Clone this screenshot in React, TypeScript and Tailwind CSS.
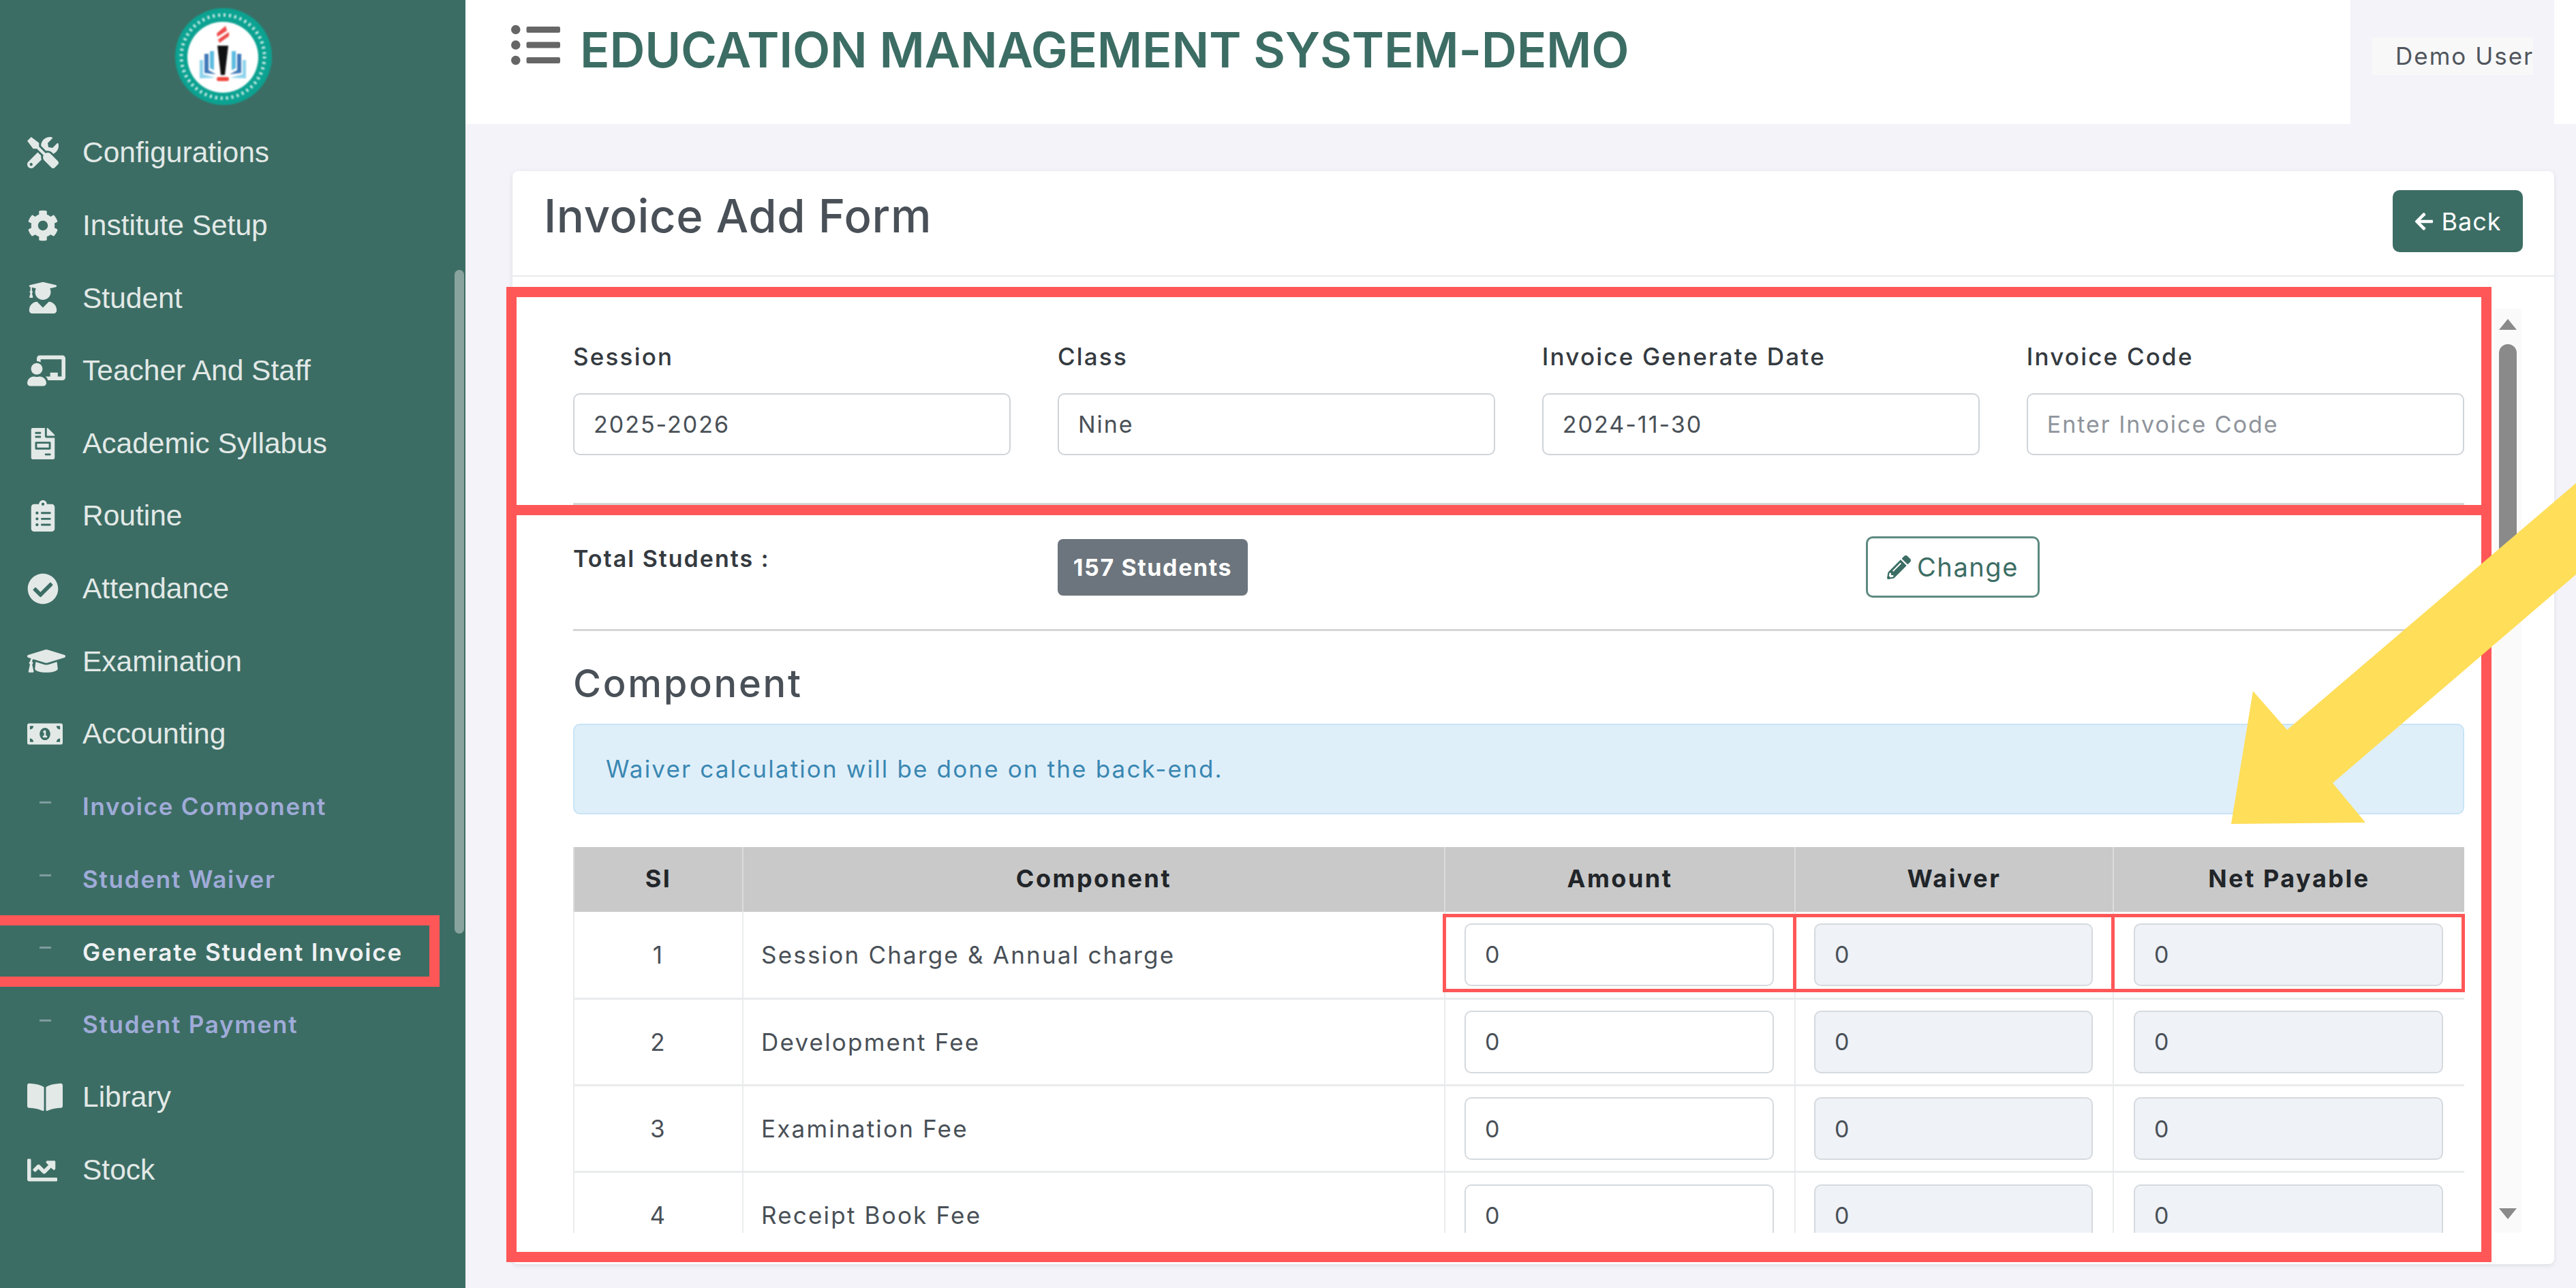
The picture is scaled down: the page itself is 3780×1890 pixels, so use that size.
import React from "react";
import {
  FaTools, FaCog, FaUserGraduate, FaChalkboardTeacher, FaFileInvoice, FaClipboardList,
  FaCheckCircle, FaGraduationCap, FaMoneyBillAlt, FaBookOpen, FaChartLine, FaListUl,
  FaArrowLeft, FaPencilAlt,
} from "react-icons/fa";

const main = [
  { label: "Configurations", Icon: FaTools, size: 46 },
  { label: "Institute Setup", Icon: FaCog, size: 46 },
  { label: "Student", Icon: FaUserGraduate, size: 46 },
  { label: "Teacher And Staff", Icon: FaChalkboardTeacher, size: 56 },
  { label: "Academic Syllabus", Icon: FaFileInvoice, size: 46 },
  { label: "Routine", Icon: FaClipboardList, size: 46 },
  { label: "Attendance", Icon: FaCheckCircle, size: 46 },
  { label: "Examination", Icon: FaGraduationCap, size: 56 },
  { label: "Accounting", Icon: FaMoneyBillAlt, size: 52 },
];
const subs = [
  { label: "Invoice Component" },
  { label: "Student Waiver" },
  { label: "Generate Student Invoice", active: true },
  { label: "Student Payment" },
];
const tail = [
  { label: "Library", Icon: FaBookOpen, size: 52 },
  { label: "Stock", Icon: FaChartLine, size: 44 },
];
const rows = ["Session Charge & Annual charge", "Development Fee", "Examination Fee", "Receipt Book Fee"];
const PF = "font-['Inter','Liberation_Sans',sans-serif]";

function MainItem({ label, Icon, size }: { label: string; Icon: React.ComponentType<{ size?: number }>; size: number }) {
  return (
    <div className="flex h-[106.6px] items-center pl-[40px] text-[#e2e9e7]">
      <span className="flex w-[81px] items-center">
        <Icon size={size} />
      </span>
      <span className="font-['Liberation_Sans',sans-serif] text-[42.5px]">{label}</span>
    </div>
  );
}

function SubItem({ label, active }: { label: string; active?: boolean }) {
  return (
    <div className={`flex h-[106.6px] items-center pl-[58px] ${PF} text-[35px] font-semibold tracking-[1.75px] ${active ? "text-[#eef1f2]" : "text-[#9fabd8]"}`}>
      <span className="mr-[46px] h-[3px] w-[17px] -translate-y-[6px] bg-[#7f9c9f]" />
      <span>{label}</span>
    </div>
  );
}

function Logo() {
  return (
    <svg width="144" height="144" viewBox="0 0 144 144" className="blur-[1px]">
      <circle cx="72" cy="72" r="71" fill="#0ca291" />
      <circle cx="71" cy="72" r="61" fill="none" stroke="#cdeee9" strokeWidth="5" strokeDasharray="3 5" />
      <circle cx="71" cy="73" r="52" fill="#fff" />
      <path d="M75 27 L62 38 L63 43 L77 34 Z" fill="#ef4a4a" />
      <path d="M80 36 L64 47 L66 52 L80 42 Z" fill="#ef4a4a" />
      <path d="M63 56 H79 L74 99 H68 Z" fill="#111" />
      <rect x="62" y="102" width="18" height="6" rx="3" fill="#f0483f" />
      <path d="M37 77 H42 V98 L60 103 L37 104 Z" fill="#8fd4ec" />
      <path d="M44 68 H50 V92 L61 98 L44 96 Z" fill="#3f78b8" />
      <path d="M52 64 H58 V92 L52 89 Z" fill="#5bbce0" />
      <path d="M105 77 H100 V98 L82 103 L105 104 Z" fill="#8fd4ec" />
      <path d="M98 68 H92 V92 L81 98 L98 96 Z" fill="#3f78b8" />
      <path d="M90 64 H84 V92 L90 89 Z" fill="#5bbce0" />
    </svg>
  );
}

function Field({ label, value, placeholder }: { label: string; value?: string; placeholder?: string }) {
  return (
    <div>
      <div className={`h-[40px] text-[35px] font-medium leading-[40px] tracking-[2.2px] text-[#343a40] ${PF}`}>{label}</div>
      <div className={`mt-[34px] flex h-[91px] items-center rounded-[10px] border-2 border-[#ced4da] bg-white pl-[28px] text-[34px] tracking-[2px] ${placeholder ? "text-[#8f949c]" : "text-[#495057]"} ${PF}`}>
        {value ?? placeholder}
      </div>
    </div>
  );
}

function CellInput({ disabled }: { disabled?: boolean }) {
  return (
    <div className={`flex h-[92px] items-center rounded-[10px] border-2 border-[#d5dade] pl-[28px] text-[34px] text-[#495057] ${disabled ? "bg-[#eff2f7]" : "bg-white"}`}>
      0
    </div>
  );
}

export default function App() {
  return (
    <div className="relative flex h-[1890px] w-[3780px] overflow-hidden bg-[#f3f3f9]">
      <aside className="relative w-[683px] shrink-0 bg-[#3c6d64]">
        <div className="flex h-[171px] justify-center pt-[11px]">
          <div className="-translate-x-[14px]"><Logo /></div>
        </div>
        {main.map((m) => <MainItem key={m.label} {...m} />)}
        {subs.map((s) => <SubItem key={s.label} {...s} />)}
        {tail.map((m) => <MainItem key={m.label} {...m} />)}
        <div className="absolute left-[667px] top-[396px] h-[974px] w-[14px] rounded-full bg-[#88a39d]" />
      </aside>

      <main className="flex min-w-0 flex-1 flex-col">
        <header className="flex h-[182px] shrink-0">
          <div className="flex w-[2766px] items-start bg-white pl-[67px] pt-[31px]">
            <span className="mt-[-1px] text-[#666]"><FaListUl size={72} /></span>
            <span className={`ml-[29px] mt-[2px] text-[72px] font-semibold leading-[80px] tracking-[-0.2px] text-[#3c6d64] ${PF}`}>
              EDUCATION MANAGEMENT SYSTEM-DEMO
            </span>
          </div>
          <div className="flex w-[299px] items-start pl-[31px] pt-[55px]">
            <div className={`flex h-[55px] w-[237px] items-center overflow-hidden bg-[#f8f8f9] pl-[35px] text-[35px] tracking-[2px] whitespace-nowrap text-[#50555c] ${PF}`}>
              Demo User
            </div>
          </div>
          <div className="flex-1 bg-white" />
        </header>

        <div className="pl-[69px] pr-[32px] pt-[69px]">
          <section className="h-[1604px] rounded-[8px] bg-white shadow-[0_2px_6px_rgba(56,65,74,0.12)]">
            <div className="flex h-[155px] items-start justify-between border-b-2 border-[#e9ebec] pl-[46px] pr-[46px]">
              <h1 className={`mt-[26px] text-[67px] font-medium leading-[80px] tracking-[0.6px] text-[#495057] ${PF}`}>Invoice Add Form</h1>
              <button className={`mt-[28px] flex h-[91px] w-[191px] items-center justify-center gap-[10px] rounded-[10px] bg-[#3c6d64] text-[36px] tracking-[1px] text-white ${PF}`}>
                <FaArrowLeft size={30} /> Back
              </button>
            </div>

            <div className="flex h-[1403px] items-start pl-[89px] pt-[47px]">
              <div className={`h-[1356px] w-[2775px] shrink-0 overflow-hidden ${PF}`}>
                <div className="mt-[50px] grid grid-cols-4 gap-x-[68.67px]">
                  <Field label="Session" value="2025-2026" />
                  <Field label="Class" value="Nine" />
                  <Field label="Invoice Generate Date" value="2024-11-30" />
                  <Field label="Invoice Code" placeholder="Enter Invoice Code" />
                </div>
                <div className="mt-[70px] h-[3px] bg-[#d4d5d6]" />

                <div className="mt-[46px] flex h-[90px] items-start">
                  <div className="mt-[7px] w-[711px] text-[34px] font-semibold tracking-[2px] text-[#343a40]">Total Students :</div>
                  <div className="mt-[4px] flex h-[83px] w-[279px] items-center justify-center rounded-[8px] bg-[#6c757d] text-[34px] font-bold tracking-[1.6px] text-white">
                    157 Students
                  </div>
                  <button className="ml-[907px] flex h-[90px] w-[255px] items-center justify-center gap-[9px] rounded-[10px] border-[3px] border-[#5d8a81] text-[38px] tracking-[1.6px] text-[#3c6d64]">
                    <FaPencilAlt size={35} /> Change
                  </button>
                </div>
                <div className="mt-[46px] h-[3px] bg-[#d4d5d6]" />

                <h2 className="mt-[47px] text-[56px] font-medium leading-[60px] tracking-[2.7px] text-[#495057]">Component</h2>
                <div className="mt-[29px] flex h-[133px] items-center rounded-[10px] border-2 border-[#c8e4f6] bg-[#dfeff9] pl-[46px] text-[35px] tracking-[2.15px] text-[#3a87b2]">
                  Waiver calculation will be done on the back-end.
                </div>

                <table className="mt-[48px] w-full table-fixed border-collapse text-[35px] tracking-[2.2px] text-[#495057]">
                  <colgroup>
                    <col className="w-[248px]" />
                    <col className="w-[1030px]" />
                    <col className="w-[514px]" />
                    <col className="w-[467px]" />
                    <col className="w-[516px]" />
                  </colgroup>
                  <thead>
                    <tr className="h-[95px] bg-[#c9c9c9] text-[#212529]">
                      {["SI", "Component", "Amount", "Waiver", "Net Payable"].map((h) => (
                        <th key={h} className="border-x-2 border-[#dcdcdc] pb-[3px] text-[36px] font-bold tracking-[2.5px]">{h}</th>
                      ))}
                    </tr>
                  </thead>
                  <tbody>
                    {rows.map((r, i) => (
                      <tr key={r} className="h-[127.3px] border-b-[3px] border-[#e9ebec]">
                        <td className="border-x-2 border-[#e9ebec] text-center">{i + 1}</td>
                        <td className="border-x-2 border-[#e9ebec] pl-[26px]">{r}</td>
                        <td className="border-x-2 border-[#e9ebec] pl-[28px] pr-[30px]"><CellInput /></td>
                        <td className="border-x-2 border-[#e9ebec] pl-[27px] pr-[29px]"><CellInput disabled /></td>
                        <td className="border-x-2 border-[#e9ebec] pl-[29px] pr-[31px]"><CellInput disabled /></td>
                      </tr>
                    ))}
                  </tbody>
                </table>
              </div>

              <div className="ml-[44px] flex h-[1356px] w-[40px] flex-col items-center bg-[#fafafa]">
                <span className="mt-[15px] h-0 w-0 border-x-[13px] border-b-[16px] border-x-transparent border-b-[#8a8a8a]" />
                <span className="mt-[21px] h-[365px] w-[26px] rounded-full bg-[#8a8a8a]" />
                <span className="mt-auto mb-[20px] h-0 w-0 border-x-[13px] border-t-[16px] border-x-transparent border-t-[#8a8a8a]" />
              </div>
            </div>
          </section>
        </div>
      </main>

      {/* Annotation overlays drawn on top of the screenshot */}
      <div className="absolute left-[743px] top-[421px] h-[335px] w-[2913px] border-[15px] border-[#ff5757]" />
      <div className="absolute left-[743px] top-[741px] h-[1111px] w-[2913px] border-[15px] border-[#ff5757]" />
      <div className="absolute left-[-20px] top-[1343px] h-[105px] w-[665px] border-[15px] border-[#ff5757]" />
      <div className="absolute left-[2117px] top-[1341px] h-[115px] w-[1500px] border-[5px] border-[#ff5757]" />
      <div className="absolute left-[2631px] top-[1341px] h-[115px] w-[5px] bg-[#ff5757]" />
      <div className="absolute left-[3098px] top-[1341px] h-[115px] w-[5px] bg-[#ff5757]" />
      <svg className="absolute left-0 top-0" width="3780" height="1890" viewBox="0 0 3780 1890">
        <polygon points="3780,709 3356,1071 3306,1014 3274,1209 3471,1207 3423,1149 3780,843" fill="#ffde59" />
      </svg>
    </div>
  );
}
